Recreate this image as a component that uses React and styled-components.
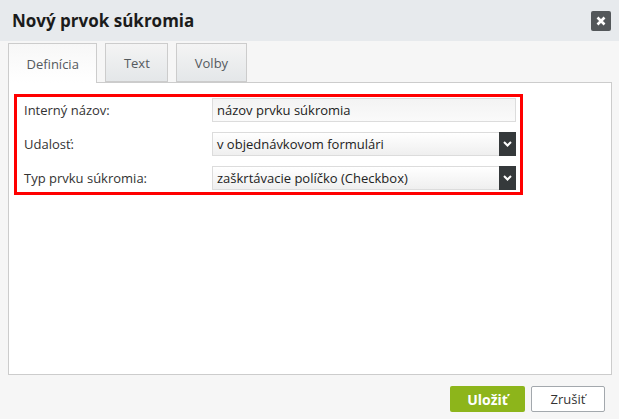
import React from "react";
import styled, { createGlobalStyle } from "styled-components";

const GlobalStyle = createGlobalStyle`
    html, body {
        margin: 0;
        padding: 0;
        background: #f6f6f6;
        font-family: "Open Sans", "Noto Sans", Arial, sans-serif;
    }
`;

const Dialog = styled.div`
    display: flex;
    flex-direction: column;
    width: 619px;
    height: 419px;
    background: #f6f6f6;
`;

const Header = styled.div`
    display: flex;
    align-items: center;
    justify-content: space-between;
    height: 41px;
    padding: 0 8px 0 12px;
    box-sizing: border-box;
    background: #e7eaed;
`;

const Title = styled.h1`
    margin: 0;
    font-size: 17px;
    font-weight: 700;
    color: #1b1b1b;
    line-height: 1;
`;

const CloseButton = styled.button`
    width: 20px;
    height: 20px;
    padding: 0;
    border: none;
    border-radius: 2px;
    background: #53575a;
    display: flex;
    align-items: center;
    justify-content: center;
    cursor: pointer;
`;

const Body = styled.div`
    flex: 1;
    display: flex;
    flex-direction: column;
    padding: 2px 7px 0 8px;
`;

const TabList = styled.div`
    display: flex;
    gap: 8px;
    height: 39px;
`;

const Tab = styled.div`
    display: flex;
    align-items: center;
    padding: 0 17.5px;
    border: 1px solid #cccccc;
    border-bottom: ${p => (p.$active ? "none" : "1px solid #cccccc")};
    background: ${p => (p.$active
        ? "linear-gradient(#f7f7f7, #ffffff)"
        : "linear-gradient(#f4f4f4, #e4e7e9)")};
    color: #555a5e;
    font-size: 13px;
    position: relative;
    z-index: ${p => (p.$active ? 1 : 0)};
    margin-bottom: ${p => (p.$active ? "-1px" : "0")};
    box-sizing: border-box;
    height: ${p => (p.$active ? "40px" : "39px")};
`;

const Panel = styled.div`
    height: 293px;
    box-sizing: border-box;
    background: #ffffff;
    border: 1px solid #cccccc;
    padding: 11px 5px 0 5px;
`;

const Highlight = styled.div`
    width: 509px;
    box-sizing: border-box;
    border: 3px solid #ff0000;
    padding: 1px 4px 2px 7px;
    display: grid;
    grid-template-columns: 188px 304px;
    row-gap: 10px;
    align-items: center;
`;

const Label = styled.label`
    font-size: 13px;
    color: #333333;
`;

const TextInput = styled.div`
    height: 24px;
    box-sizing: border-box;
    border: 1px solid #dcdcdc;
    background: linear-gradient(#f3f3f3, #fafafa);
    padding: 0 4px;
    display: flex;
    align-items: center;
    font-size: 13px;
    color: #222222;
`;

const Select = styled.div`
    height: 24px;
    box-sizing: border-box;
    border: 1px solid #dcdcdc;
    background: linear-gradient(#ffffff, #efefef);
    padding-left: 4px;
    display: flex;
    align-items: center;
    justify-content: space-between;
    font-size: 13px;
    color: #222222;
`;

const Arrow = styled.span`
    width: 17px;
    height: 24px;
    margin: -1px -1px -1px 0;
    background: #35393b;
    display: flex;
    align-items: center;
    justify-content: center;
`;

const Footer = styled.div`
    display: flex;
    justify-content: flex-end;
    gap: 6px;
    padding: 11px 7px 0 0;
`;

const Button = styled.button`
    height: 26px;
    box-sizing: border-box;
    border-radius: 2px;
    font-family: inherit;
    padding: 0;
    cursor: pointer;
    width: ${p => (p.$primary ? "75px" : "74px")};
    border: ${p => (p.$primary ? "none" : "1px solid #a3a8ad")};
    background: ${p => (p.$primary ? "#8db51b" : "#ffffff")};
    color: ${p => (p.$primary ? "#ffffff" : "#333333")};
    font-size: ${p => (p.$primary ? "14px" : "13px")};
    font-weight: ${p => (p.$primary ? 700 : 400)};
`;

const Chevron = () => (
    <svg width="9" height="6" viewBox="0 0 9 6">
        <polyline points="1,1 4.5,4.5 8,1" fill="none" stroke="#ffffff" strokeWidth="2" />
    </svg>
);

const App = () => {
    return (
        <React.Fragment>
            <GlobalStyle />
            <Dialog>
                <Header>
                    <Title>Nový prvok súkromia</Title>
                    <CloseButton>
                        <svg width="10" height="10" viewBox="0 0 10 10">
                            <path d="M1.5 1.5 L8.5 8.5 M8.5 1.5 L1.5 8.5" stroke="#ffffff" strokeWidth="2.6" />
                        </svg>
                    </CloseButton>
                </Header>
                <Body>
                    <TabList>
                        <Tab $active>Definícia</Tab>
                        <Tab>Text</Tab>
                        <Tab>Volby</Tab>
                    </TabList>
                    <Panel>
                        <Highlight>
                            <Label>Interný názov:</Label>
                            <TextInput>názov prvku súkromia</TextInput>

                            <Label>Udalosť:</Label>
                            <Select>
                                v objednávkovom formulári
                                <Arrow><Chevron /></Arrow>
                            </Select>

                            <Label>Typ prvku súkromia:</Label>
                            <Select>
                                zaškrtávacie políčko (Checkbox)
                                <Arrow><Chevron /></Arrow>
                            </Select>
                        </Highlight>
                    </Panel>
                    <Footer>
                        <Button $primary>Uložiť</Button>
                        <Button>Zrušiť</Button>
                    </Footer>
                </Body>
            </Dialog>
        </React.Fragment>
    );
};

export default App;
